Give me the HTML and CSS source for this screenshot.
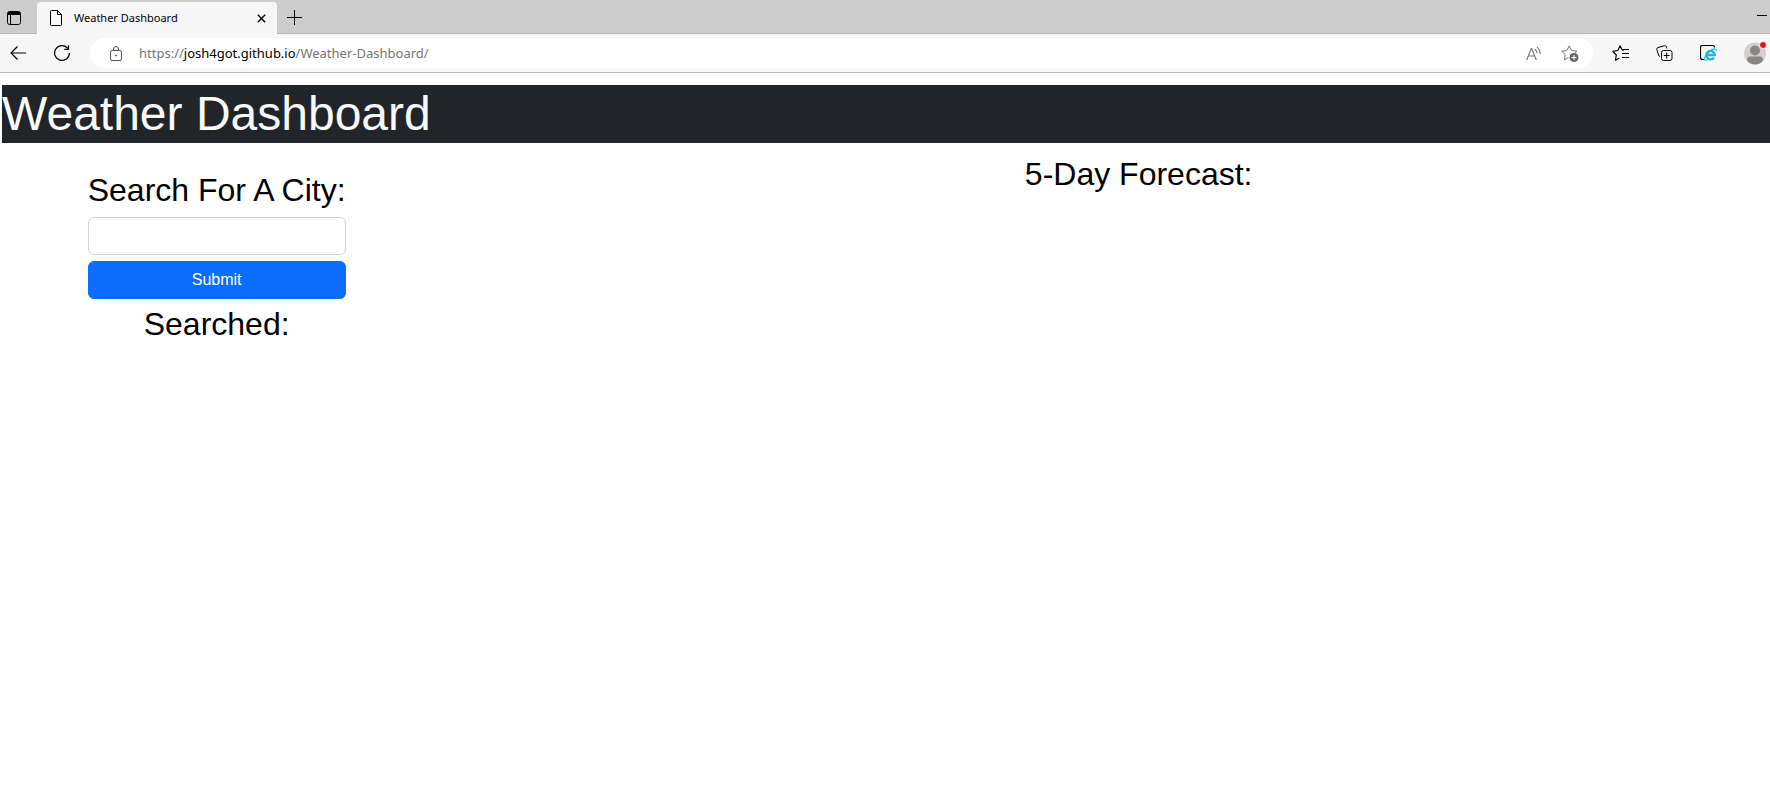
FILE: index.html
```html
<!DOCTYPE html>
<html lang="en">
<head>
<meta charset="utf-8">
<title>Weather Dashboard</title>
<link rel="stylesheet" href="styles.css">
</head>
<body>
<div class="browser">
  <div class="tabstrip">
    <button class="icon-btn tab-actions" aria-label="Tab actions">
      <svg width="14" height="14" viewBox="0 0 14 14" fill="none" stroke="#000"><rect x=".5" y=".5" width="13" height="13" rx="2"/><path d="M1 1.500h12M1 2.500h12M1 3.500h12M3.500 4v9.500"/></svg>
    </button>
    <div class="tab">
      <svg width="12" height="16" viewBox="0 0 12 16" fill="none" stroke="#000"><path d="M1.500.5h6l4 4v10q0 1-1 1h-9q-1 0-1-1v-13q0-1 1-1zM7.500.5v4h4"/></svg>
      <span class="tab-title">Weather Dashboard</span>
      <button class="icon-btn" aria-label="Close tab">
        <svg width="9" height="9" viewBox="0 0 9 9" fill="none" stroke="#000" stroke-width="1.400"><path d="M.8.8l7.400 7.400M8.200.8L.8 8.200"/></svg>
      </button>
    </div>
    <button class="icon-btn new-tab" aria-label="New tab">
      <svg width="15" height="15" viewBox="0 0 15 15" fill="none" stroke="#000"><path d="M7.500 0v15M0 7.500h15"/></svg>
    </button>
    <button class="icon-btn minimize" aria-label="Minimize">
      <svg width="10" height="3" viewBox="0 0 10 3" stroke="#000"><path d="M0 1.500h10"/></svg>
    </button>
  </div>
  <div class="toolbar">
    <button class="icon-btn back" aria-label="Back">
      <svg width="16" height="14" viewBox="0 0 16 14" fill="none" stroke="#000" stroke-width="1.200"><path d="M16 7H1M7.500.5L1 7l6.500 6.500"/></svg>
    </button>
    <button class="icon-btn reload" aria-label="Refresh">
      <svg width="16" height="16" viewBox="0 0 16 16" fill="none" stroke="#000" stroke-width="1.200"><path d="M15.400 8A7.400 7.400 0 1 1 13.800 3.400M14.500.300v4h-4.200"/></svg>
    </button>
    <div class="address">
      <svg width="12" height="15" viewBox="0 0 12 15" fill="none" stroke="#555"><rect x=".5" y="4.500" width="11" height="10" rx="1.500"/><path d="M3.500 4.500V3a2.500 2.500 0 0 1 5 0v1.500"/><circle cx="6" cy="9.500" r=".6" fill="#555"/></svg>
      <span class="url">https://<b>josh4got.github.io</b>/Weather-Dashboard/</span>
      <button class="icon-btn" aria-label="Read aloud">
        <svg width="16" height="15" viewBox="0 0 16 15" fill="none" stroke="#767676" stroke-width="1.100"><path d="M.7 14L5.300 2.500h.4L10.300 14M2.300 10h6.400M8.800 3.200q2 1.300 2.400 4M11 .9q3 2.600 3.400 7.100" /></svg>
      </button>
      <button class="icon-btn" aria-label="Add to favorites">
        <svg width="18" height="17" viewBox="0 0 18 17" fill="none" stroke="#767676"><path d="M7 12.800l-3.700 2.200.8-5.200L.8 6.200l5-.7L8.200.9l2.300 4.600 5.300.7-1.500 1.500" stroke-linejoin="round" stroke-linecap="round"/><circle cx="13" cy="12.500" r="4.500" fill="#666" stroke="none"/><path d="M13 10v5M10.500 12.500h5" stroke="#fff"/></svg>
      </button>
    </div>
    <div class="actions">
      <button class="icon-btn" aria-label="Favorites">
        <svg width="17" height="16" viewBox="0 0 17 16" fill="none" stroke="#000" stroke-width="1.200" stroke-linejoin="round"><path d="M7.500 13L3.500 15.200l.8-5.200L.8 6.300l5-.8L8 .9l2.200 3.900 1.800.4M10.500 4.500H17M10 8.500h7M10 12.500h7"/></svg>
      </button>
      <button class="icon-btn" aria-label="Collections">
        <svg width="17" height="16" viewBox="0 0 17 16" fill="none" stroke="#000"><rect x="5.500" y="5.500" width="10.500" height="10" rx="2"/><path d="M10.700 7.500v6M7.700 10.500h6M4 11.500q-1 0-1.500-1.500L.8 4.500Q.4 3 2 2.500L8.500.7Q10 .3 10.500 2l.5 1.500"/></svg>
      </button>
      <button class="icon-btn" aria-label="Internet Explorer mode">
        <svg width="17" height="16" viewBox="0 0 17 16" fill="none"><path d="M4 14.500H2.500q-2 0-2-2v-10q0-2 2-2h10q2 0 2 2" stroke="#000" stroke-width="1.200"/><path d="M6.800 10h8a4.200 4.200 0 1 0-.8 2.600" stroke="#1fb6ec" stroke-width="2.400"/><path d="M8 14.300q-3.500 2-3.500-.3 0-2.500 4-6.500T15 3.800q1.500 0 1 2" stroke="#1fb6ec" stroke-width="1.200"/></svg>
      </button>
      <button class="icon-btn" aria-label="Profile">
        <svg width="23" height="24" viewBox="0 0 23 24"><circle cx="11" cy="12.500" r="11" fill="#d2d0ce"/><circle cx="11" cy="9.500" r="5" fill="#8a8683"/><path d="M3 19.500q0-4 3-4h10q3 0 3 4-3 4-8 4t-8-4z" fill="#8a8683"/><circle cx="19" cy="4" r="3.500" fill="#e81010" stroke="#f7f7f7"/></svg>
      </button>
    </div>
  </div>
</div>
<div class="page">
  <header class="banner"><h1>Weather Dashboard</h1></header>
  <main class="content">
    <section class="search">
      <form class="search-form">
        <h2><label for="city">Search For A City:</label></h2>
        <input class="city" id="city" type="text">
        <button class="submit" type="submit">Submit</button>
        <h2 class="searched">Searched:</h2>
      </form>
    </section>
    <section class="forecast"><h2>5-Day Forecast:</h2></section>
  </main>
</div>
</body>
</html>
```
FILE: styles.css
```css
* { box-sizing: border-box; }
body { margin: 0; background: #fff; color: #000; font-family: "Liberation Sans", Arial, sans-serif; }
svg { display: block; flex: none; }
h1, h2 { margin: 0; font-weight: 400; }

.browser { font-family: "Noto Sans", "Segoe UI", sans-serif; }
.icon-btn { display: block; flex: none; margin: 0; padding: 0; border: 0; background: none; }

.tabstrip { display: flex; align-items: center; height: 34px; padding: 2px 4px 0 7px; background: #cdcdcd; border-bottom: 1px solid #b8b8b8; }
.tab { display: flex; align-items: center; width: 240px; height: 32px; margin: 0 0 -1px 16px; padding: 0 11px 0 13px; border-radius: 4px 4px 0 0; background: #f7f7f7; }
.tab-title { flex: 1; margin-left: 12px; font-size: 11px; line-height: 16px; }
.new-tab { margin-left: 10px; }
.minimize { margin: 0 -1px 4px auto; }

.toolbar { display: flex; align-items: center; height: 39px; padding: 0 3px 0 10px; background: #f7f7f7; border-bottom: 1px solid #bababa; }
.reload { margin-left: 28px; }
.address { display: flex; flex: 1; align-items: center; gap: 19px; height: 30px; margin-left: 20px; padding: 0 14px 0 20px; border-radius: 15px; background: #fff; }
.url { flex: 1; margin-left: -2px; color: #767676; font-size: 13px; line-height: 18px; }
.url b { color: #000; font-weight: 400; }
.actions { display: flex; align-items: center; gap: 27px; margin-left: 19px; }

.page { padding: 12px 0 0 2px; }
.banner { background: #212529; color: #f8f9fa; }
.banner h1 { font-size: 48px; line-height: 58px; }
.content { display: grid; grid-template-columns: 17fr 50fr; gap: 76px; padding-top: 12px; }
h2 { font-size: 32px; line-height: 38px; }
.search { display: flex; justify-content: center; padding-top: 16px; }
.search-form { display: grid; gap: 6px; align-content: start; text-align: center; }
.city { width: 100%; min-width: 0; height: 38px; margin-top: 2px; padding: 6px 12px; border: 1px solid #ced4da; border-radius: 6px; background: #fff; font: 16px/24px "Liberation Sans", Arial, sans-serif; }
.submit { height: 38px; padding: 6px 12px; border: 1px solid #0d6efd; border-radius: 6px; background: #0d6efd; color: #fff; font: 16px/24px "Liberation Sans", Arial, sans-serif; }
.forecast { text-align: center; }
```
